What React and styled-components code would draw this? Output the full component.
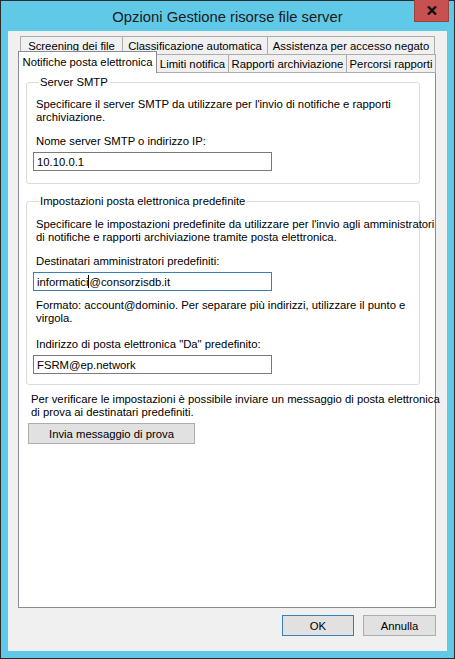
import React from 'react';
import styled, {createGlobalStyle} from 'styled-components';

const GlobalStyle = createGlobalStyle`
  html, body {
    margin: 0;
    padding: 0;
    background: #fff;
  }
  body {
    font-family: "Liberation Sans", Arial, sans-serif;
    font-size: 11.3px;
    color: #000;
  }
`;

const Window = styled.div`
  width: 455px;
  height: 659px;
  box-sizing: border-box;
  border: 1px solid #2b2b2b;
  background: #61c9e8;
  padding: 0 7px 7px 7px;
  display: flex;
  flex-direction: column;
`;

const TitleBar = styled.div`
  height: 30px;
  flex: none;
  display: flex;
  align-items: center;
  justify-content: center;
  position: relative;
  font-size: 14.8px;
  color: #1a1a1a;
  padding-top: 2px;
  box-sizing: border-box;
`;

const CloseBtn = styled.div`
  position: absolute;
  top: -1px;
  right: -2px;
  width: 33px;
  height: 21px;
  background: #c75050;
  border: 1px solid #9b4141;
  border-top: none;
  display: flex;
  align-items: center;
  justify-content: center;
`;

const Client = styled.div`
  flex: 1;
  background: #f0f0f0;
  padding: 5px 11px 0 10px;
  display: flex;
  flex-direction: column;
`;

const TabRow = styled.div`
  display: flex;
  height: 18px;
  margin-left: ${p => p.$indent || 0}px;
`;

const Tab = styled.div`
  width: ${p => p.$w}px;
  box-sizing: border-box;
  height: ${p => (p.$active ? 22 : 19)}px;
  margin-top: ${p => (p.$active ? -3 : 0)}px;
  margin-left: ${p => (p.$first ? 0 : -1)}px;
  border: 1px solid ${p => (p.$active ? '#898c95' : '#acacac')};
  border-bottom: ${p => (p.$active ? 'none' : '1px solid #acacac')};
  background: ${p => (p.$active ? '#fff' : '#f0f0f0')};
  display: flex;
  align-items: center;
  justify-content: center;
  padding-bottom: ${p => (p.$active ? 2 : 0)}px;
  position: relative;
  z-index: ${p => (p.$active ? 2 : 1)};
  white-space: nowrap;
`;

const Panel = styled.div`
  height: 536px;
  box-sizing: border-box;
  border: 1px solid #898c95;
  background: #fff;
  padding: 3px 15px 0 7px;
  display: flex;
  flex-direction: column;
`;

const Group = styled.fieldset`
  margin: 0;
  border: 1px solid #dcdcdc;
  border-radius: 3px;
  padding: ${p => p.$top}px 0 ${p => p.$bottom}px 6px;
  min-width: 0;
  display: flex;
  flex-direction: column;
  align-items: flex-start;
`;

const Legend = styled.legend`
  padding: 0 2px 0 1px;
  margin-left: 6px;
  line-height: 13px;
`;

const Text = styled.div`
  line-height: 13px;
  padding-left: 3px;
  white-space: nowrap;
  margin-bottom: ${p => p.$mb || 0}px;
`;

const Field = styled.div`
  width: 239px;
  height: 19px;
  box-sizing: border-box;
  border: 1px solid ${p => (p.$focused ? '#3c7fb1' : '#7a7a7a')};
  background: #fff;
  display: flex;
  align-items: center;
  padding-left: 3px;
  margin-top: 4px;
  margin-bottom: ${p => p.$mb || 0}px;
`;

const Caret = styled.span`
  display: inline-block;
  width: 1px;
  height: 13px;
  background: #000;
`;

const Spacer = styled.div`
  height: ${p => p.$h}px;
  flex: none;
`;

const Button = styled.button`
  font-family: inherit;
  font-size: 11.3px;
  color: #000;
  width: ${p => p.$w}px;
  height: 21px;
  box-sizing: border-box;
  background: #e1e1e1;
  border: 1px solid ${p => (p.$default ? '#3c7fb1' : '#adadad')};
  padding: 0;
  margin: 0;
`;

const TestBlock = styled.div`
  padding-left: 2px;
  display: flex;
  flex-direction: column;
  align-items: flex-start;
`;

const Footer = styled.div`
  display: flex;
  justify-content: flex-end;
  gap: 9px;
  padding-top: 7px;
`;

export default function App() {
  return (
    <>
      <GlobalStyle />
      <Window>
        <TitleBar>
          Opzioni Gestione risorse file server
          <CloseBtn>
            <svg width="10" height="9" viewBox="0 0 10 9">
              <path d="M1 0.5 L9 8.5 M9 0.5 L1 8.5" stroke="#111" strokeWidth="2.4" />
            </svg>
          </CloseBtn>
        </TitleBar>
        <Client>
          <TabRow $indent={2}>
            <Tab $w={103} $first>Screening dei file</Tab>
            <Tab $w={146}>Classificazione automatica</Tab>
            <Tab $w={168}>Assistenza per accesso negato</Tab>
          </TabRow>
          <TabRow>
            <Tab $w={139} $first $active>Notifiche posta elettronica</Tab>
            <Tab $w={73}>Limiti notifica</Tab>
            <Tab $w={119}>Rapporti archiviazione</Tab>
            <Tab $w={90}>Percorsi rapporti</Tab>
          </TabRow>
          <Panel>
            <Group $top={9} $bottom={12}>
              <Legend>Server SMTP</Legend>
              <Text $mb={11}>
                Specificare il server SMTP da utilizzare per l'invio di notifiche e rapporti<br />
                archiviazione.
              </Text>
              <Text>Nome server SMTP o indirizzo IP:</Text>
              <Field>10.10.0.1</Field>
            </Group>
            <Spacer $h={11} />
            <Group $top={10} $bottom={10}>
              <Legend>Impostazioni posta elettronica predefinite</Legend>
              <Text $mb={11}>
                Specificare le impostazioni predefinite da utilizzare per l'invio agli amministratori<br />
                di notifiche e rapporti archiviazione tramite posta elettronica.
              </Text>
              <Text>Destinatari amministratori predefiniti:</Text>
              <Field $focused $mb={8}>
                informatici<Caret />@consorzisdb.it
              </Field>
              <Text $mb={13}>
                Formato: account@dominio. Per separare più indirizzi, utilizzare il punto e<br />
                virgola.
              </Text>
              <Text>Indirizzo di posta elettronica "Da" predefinito:</Text>
              <Field>FSRM@ep.network</Field>
            </Group>
            <Spacer $h={8} />
            <TestBlock>
              <Text $mb={4}>
                Per verificare le impostazioni è possibile inviare un messaggio di posta elettronica<br />
                di prova ai destinatari predefiniti.
              </Text>
              <Button $w={167}>Invia messaggio di prova</Button>
            </TestBlock>
          </Panel>
          <Footer>
            <Button $w={72} $default>OK</Button>
            <Button $w={73}>Annulla</Button>
          </Footer>
        </Client>
      </Window>
    </>
  );
}
